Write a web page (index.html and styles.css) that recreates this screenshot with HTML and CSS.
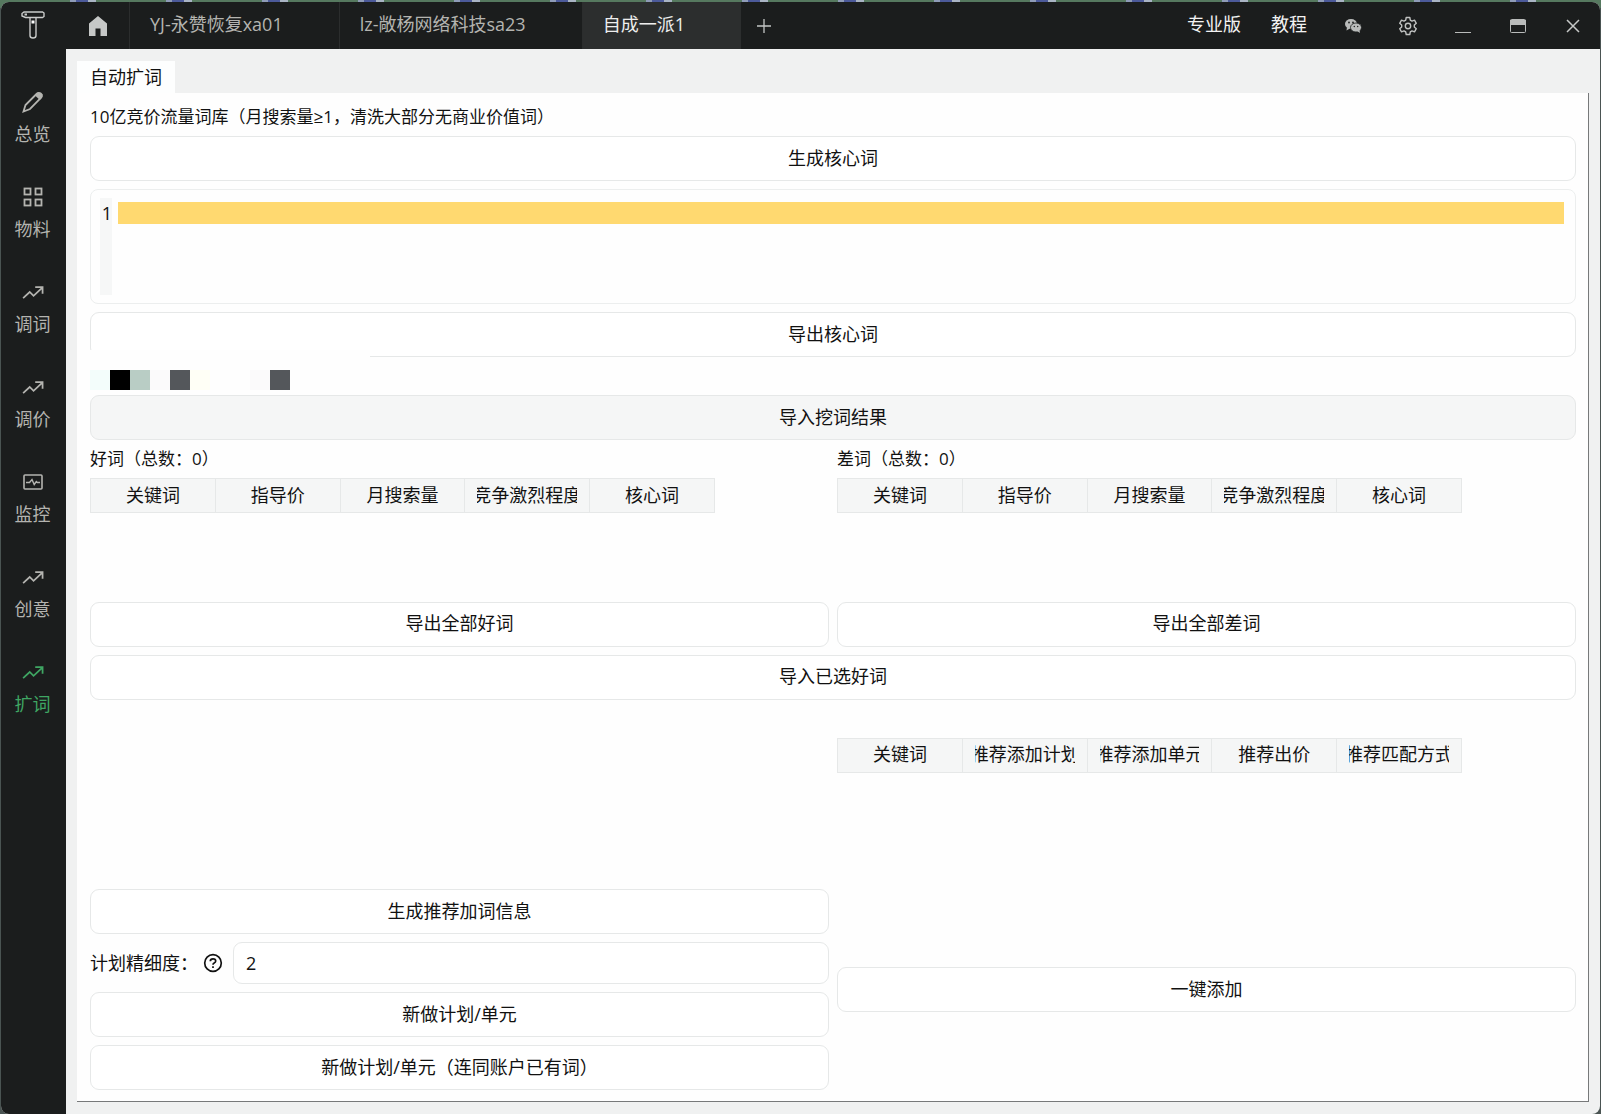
FILE: index.html
```html
<!DOCTYPE html>
<html lang="zh-CN">
<head>
<meta charset="utf-8">
<meta name="viewport" content="width=device-width, initial-scale=1">
<title>自动扩词</title>
<link rel="stylesheet" href="styles.css">
</head>
<body>
<svg class="sprite" aria-hidden="true">
  <symbol id="trend" viewBox="0 0 20 20">
    <path d="M1 15.500 7 10 10.500 13.500 18.500 6M12 5.500H18.700V11.500" fill="none" stroke="currentColor" stroke-width="1.600"/>
  </symbol>
</svg>
<div class="window">
  <aside class="sidebar">
    <svg class="logo" viewBox="0 0 24 28" aria-hidden="true" fill="none" stroke="#c9cbca" stroke-width="1.400">
      <path d="M3 1h18.500l1.500 1v3.500l-1.500 1H4.500L1 5V2.500z"/>
      <path d="M3.500 3.500h2.500" stroke-width="2"/>
      <path d="M9 6.500v18q0 2.500 3 2.500t3-2.500v-18"/>
      <path d="M10.500 11h3" stroke="#fff" stroke-width="3"/>
    </svg>
    <nav class="menu">
      <a class="menu-item" href="#overview">
        <svg class="menu-icon" viewBox="0 0 22 22" aria-hidden="true"><path d="M1.500 20.500 3.500 14 14.500 3q2-2 4-.2t.3 4.200L8 18z" fill="none" stroke="currentColor" stroke-width="1.800"/><path d="M13 4.500 16 1.500 19 1.500 20.800 3.500 20.500 6 17.800 9z" fill="currentColor"/></svg>
        总览</a>
      <a class="menu-item" href="#material">
        <svg class="menu-icon" viewBox="0 0 22 22" aria-hidden="true" fill="none" stroke="currentColor" stroke-width="1.800"><rect x="2.500" y="2.500" width="6" height="6"/><rect x="13.500" y="2.500" width="6" height="6"/><rect x="2.500" y="13.500" width="6" height="6"/><rect x="13.500" y="13.500" width="6" height="6"/></svg>
        物料</a>
      <a class="menu-item" href="#words"><svg class="menu-icon" aria-hidden="true"><use href="#trend"/></svg>调词</a>
      <a class="menu-item" href="#price"><svg class="menu-icon" aria-hidden="true"><use href="#trend"/></svg>调价</a>
      <a class="menu-item" href="#monitor">
        <svg class="menu-icon" viewBox="0 0 22 22" aria-hidden="true" fill="none" stroke="currentColor"><rect x="2" y="4" width="18" height="14" rx="1" stroke-width="1.600"/><path d="M4 11.500H7.500L10 8.500 12.200 13.500 14.300 10.500 15.300 11.500H18" stroke-width="1.400"/></svg>
        监控</a>
      <a class="menu-item" href="#creative"><svg class="menu-icon" aria-hidden="true"><use href="#trend"/></svg>创意</a>
      <a class="menu-item is-active" href="#expand"><svg class="menu-icon" aria-hidden="true"><use href="#trend"/></svg>扩词</a>
    </nav>
  </aside>

  <div class="workspace">
    <header class="titlebar">
      <button class="home" type="button" aria-label="首页">
        <svg width="20" height="20" viewBox="0 0 20 20" aria-hidden="true"><path d="M10 0 19 7.500V20H12.500V12.500H7.500V20H1V7.500z" fill="#c6c8c7"/></svg>
      </button>
      <a class="account" href="#a1">YJ-永赞恢复xa01</a>
      <a class="account" href="#a2">lz-敞杨网络科技sa23</a>
      <a class="account is-active" href="#a3">自成一派1</a>
      <button class="add" type="button" aria-label="新建标签">
        <svg width="16" height="16" viewBox="0 0 16 16" aria-hidden="true"><path d="M8 1V15M1 8H15" stroke="#c4c6c5" stroke-width="1.300"/></svg>
      </button>
      <div class="tools">
        <a class="tool-link" href="#pro">专业版</a>
        <a class="tool-link" href="#help">教程</a>
        <button class="tool" type="button" aria-label="微信">
          <svg width="18" height="16" viewBox="0 0 18 16" aria-hidden="true"><ellipse cx="7" cy="6" rx="6" ry="5" fill="#b9bbba"/><path d="M3 9 2.500 12.500 6 10.500z" fill="#b9bbba"/><ellipse cx="12" cy="9.500" rx="5.500" ry="4.500" fill="#b9bbba" stroke="#1b1d1d" stroke-width=".8"/><path d="M13 13 16 15 15.500 12z" fill="#b9bbba"/><g fill="#1b1d1d"><circle cx="5" cy="4.500" r=".9"/><circle cx="9" cy="4.500" r=".9"/><circle cx="10.300" cy="8.500" r=".7"/><circle cx="13.700" cy="8.500" r=".7"/></g></svg>
        </button>
        <button class="tool" type="button" aria-label="设置">
          <svg width="20" height="20" viewBox="0 0 20 20" aria-hidden="true" fill="none" stroke="#c0c2c1" stroke-width="1.400"><path d="M8.200 1.500h3.600l.5 2.600 1.700 1 2.500-.9 1.800 3.100-2 1.700v2l2 1.700-1.800 3.100-2.500-.9-1.700 1-.5 2.600H8.200l-.5-2.600-1.700-1-2.500.9-1.800-3.100 2-1.700V9l-2-1.700 1.800-3.100 2.500.9 1.700-1z" stroke-linejoin="round"/><circle cx="10" cy="10" r="2.700"/></svg>
        </button>
        <button class="tool" type="button" aria-label="最小化">
          <svg width="16" height="16" viewBox="0 0 16 16" aria-hidden="true"><path d="M0 14.500H16" stroke="#b9bbba"/></svg>
        </button>
        <button class="tool" type="button" aria-label="最大化">
          <svg width="16" height="14" viewBox="0 0 16 14" aria-hidden="true"><rect x=".5" y=".5" width="15" height="13" rx="1" fill="none" stroke="#b9bbba"/><path d="M0 1H16V6H0z" fill="#b9bbba"/></svg>
        </button>
        <button class="tool" type="button" aria-label="关闭">
          <svg width="14" height="14" viewBox="0 0 14 14" aria-hidden="true"><path d="M1 1 13 13M13 1 1 13" stroke="#c6c8c7" stroke-width="1.500"/></svg>
        </button>
      </div>
    </header>

    <main class="content">
      <button class="page-tab" type="button">自动扩词</button>
      <section class="panel">
        <label class="caption" for="seed">10亿竞价流量词库（月搜索量≥1，清洗大部分无商业价值词）</label>
        <button class="btn" type="button">生成核心词</button>
        <div class="editor">
          <div class="gutter">1</div>
          <textarea class="code" id="seed" spellcheck="false"></textarea>
        </div>
        <button class="btn" type="button">导出核心词</button>
        <div class="mosaic" aria-hidden="true">
          <i class="px mint"></i><i class="px black"></i><i class="px sage"></i><i class="px mist"></i><i class="px slate"></i><i class="px cream"></i><i class="px"></i><i class="px"></i><i class="px mist"></i><i class="px slate"></i>
        </div>
        <button class="btn is-filled" type="button">导入挖词结果</button>

        <div class="columns results">
          <div class="column">
            <div class="caption">好词（总数：0）</div>
            <div class="grid-area">
              <table class="grid">
                <thead><tr><th><span>关键词</span></th><th><span>指导价</span></th><th><span>月搜索量</span></th><th><span>竞争激烈程度</span></th><th><span>核心词</span></th></tr></thead>
              </table>
            </div>
            <button class="btn" type="button">导出全部好词</button>
          </div>
          <div class="column">
            <div class="caption">差词（总数：0）</div>
            <div class="grid-area">
              <table class="grid">
                <thead><tr><th><span>关键词</span></th><th><span>指导价</span></th><th><span>月搜索量</span></th><th><span>竞争激烈程度</span></th><th><span>核心词</span></th></tr></thead>
              </table>
            </div>
            <button class="btn" type="button">导出全部差词</button>
          </div>
        </div>

        <button class="btn" type="button">导入已选好词</button>

        <div class="columns recommend">
          <div></div>
          <div class="column">
            <div class="caption"></div>
            <div class="grid-area">
              <table class="grid">
                <thead><tr><th><span>关键词</span></th><th><span>推荐添加计划</span></th><th><span>推荐添加单元</span></th><th><span>推荐出价</span></th><th><span>推荐匹配方式</span></th></tr></thead>
              </table>
            </div>
          </div>
          <div class="column">
            <button class="btn" type="button">生成推荐加词信息</button>
            <div class="field">
              <label for="level">计划精细度：</label>
              <svg class="help" viewBox="0 0 20 20" aria-hidden="true" fill="none" stroke="#111" stroke-width="1.700"><circle cx="10" cy="10" r="8.300"/><path d="M7.300 8.200Q7.300 5.800 10 5.800T12.700 8Q12.700 9.300 11.200 10 10 10.600 10 11.800M10 13.200V14.900"/></svg>
              <input class="input" id="level" type="text" value="2">
            </div>
            <button class="btn" type="button">新做计划/单元</button>
            <button class="btn" type="button">新做计划/单元（连同账户已有词）</button>
          </div>
          <button class="btn add-all" type="button">一键添加</button>
        </div>
      </section>
    </main>
  </div>
</div>
</body>
</html>
```
FILE: styles.css
```css
* {
  box-sizing: border-box;
}

body {
  margin: 0;
  min-height: 100vh;
  display: flex;
  padding: 2px 1px 0;
  background:
    repeating-linear-gradient(90deg, #56795f 0 70px, #8f9cb8 70px 76px, #4c5a9a 76px 88px, #a9b4c4 88px 96px) top / 100% 8px no-repeat,
    #4a5452;
  font: 18px/22px "Open Sans", "Noto Sans CJK SC", sans-serif;
  color: #111;
}

button,
input,
textarea {
  font: inherit;
  color: inherit;
}

button {
  padding: 0;
  border: 0;
  background: none;
}

a {
  color: inherit;
  text-decoration: none;
}

.sprite {
  position: absolute;
  width: 0;
  height: 0;
}

.window {
  flex: 1;
  min-width: 0;
  display: flex;
  border-radius: 8px;
  overflow: hidden;
  background: #f0f1f1;
}

/* left navigation */
.sidebar {
  flex: 0 0 65px;
  padding-right: 2px;
  background: #1b1d1d;
  color: #b4b4b0;
}

.logo {
  display: block;
  width: 24px;
  height: 28px;
  margin: 9px auto 0;
}

.menu {
  display: flex;
  flex-direction: column;
  gap: 41px;
  margin-top: 52px;
}

.menu-item {
  display: flex;
  flex-direction: column;
  align-items: center;
  gap: 10px;
}

.menu-icon {
  width: 22px;
  height: 22px;
}

.menu-item.is-active {
  color: #3fa663;
}

/* title bar */
.workspace {
  flex: 1;
  min-width: 0;
  display: flex;
  flex-direction: column;
}

.titlebar {
  flex: 0 0 47px;
  display: flex;
  background: #1b1d1d;
  color: #b4b4b0;
}

.titlebar svg {
  display: block;
  margin: 0 auto;
}

.home {
  flex: 0 0 63px;
}

.account {
  display: flex;
  align-items: center;
  padding: 0 56px 3px 20px;
  border-left: 1px solid #2b2d2d;
  white-space: nowrap;
}

.account.is-active {
  background: #2c2e2e;
  color: #eee;
}

.add {
  flex: 0 0 46px;
}

.tools {
  display: flex;
  align-items: center;
  margin-left: auto;
  color: #f2f2f2;
}

.tool-link {
  padding: 0 15px 3px;
  white-space: nowrap;
}

.tool {
  width: 55px;
  height: 47px;
}

.tool-link + .tool {
  margin-left: 3px;
}

/* page body */
.content {
  flex: 1;
  display: flex;
  flex-direction: column;
  align-items: flex-start;
  padding: 12px 11px 12px;
}

.page-tab {
  height: 32px;
  padding: 0 13px;
  background: #fdfefe;
}

.panel {
  flex: 1;
  align-self: stretch;
  display: flex;
  flex-direction: column;
  gap: 8px;
  padding: 13px 12px 11px 13px;
  border-right: 1px solid #77797a;
  border-bottom: 1px solid #77797a;
  background: #fefefe;
}

.caption {
  min-height: 22px;
  font-size: 17px;
  white-space: nowrap;
}

.btn {
  width: 100%;
  height: 45px;
  padding-bottom: 2px;
  border: 1px solid #e6e8e8;
  border-radius: 9px;
  background: #fff;
}

.btn.is-filled {
  background: #f5f6f6;
}

.editor {
  display: flex;
  gap: 6px;
  height: 115px;
  padding: 8px 11px 8px 9px;
  border: 1px solid #eceeee;
  border-radius: 8px;
}

.gutter {
  width: 12px;
  padding: 4px 0 0;
  background: #f6f7f7;
  text-align: right;
}

.code {
  flex: 1;
  margin-top: 4px;
  padding: 0 4px;
  border: 0;
  outline: 0;
  resize: none;
  background: linear-gradient(#ffd970, #ffd970) top / 100% 22px no-repeat;
}

/* redacted account line, its patch reaches over the button above */
.mosaic {
  position: relative;
  display: flex;
  height: 22px;
  padding-top: 5px;
}

.mosaic::before {
  content: "";
  position: absolute;
  top: -15px;
  left: 0;
  width: 280px;
  height: 20px;
  background: #fefefe;
}

.px {
  flex: 0 0 20px;
  height: 20px;
}

.mint { background: #f3fdfb; }
.black { background: #000; }
.sage { background: #b9cdc5; }
.mist { background: #fbfafb; }
.slate { background: #54575b; }
.cream { background: #fffff6; }

.columns {
  display: grid;
  grid-template-columns: repeat(2, minmax(0, 1fr));
  gap: 8px;
}

.results {
  flex: 1 1 198px;
}

.recommend {
  flex: 1 1 382px;
  grid-template-rows: 1fr auto;
}

.column {
  display: flex;
  flex-direction: column;
  gap: 8px;
}

.grid-area {
  flex: 1;
}

.grid {
  table-layout: fixed;
  width: 625px;
  max-width: 100%;
  border-collapse: collapse;
}

.grid th {
  height: 34px;
  padding: 0 12px 2px;
  border: 1px solid #e6e8e8;
  background: #f5f6f6;
  font-weight: 400;
}

.grid span {
  display: flex;
  justify-content: center;
  overflow: hidden;
  white-space: nowrap;
}

.field {
  display: flex;
  align-items: center;
}

.help {
  flex: 0 0 20px;
  height: 20px;
  margin: 0 10px 0 5px;
}

.input {
  flex: 1;
  min-width: 0;
  height: 42px;
  padding: 0 12px;
  border: 1px solid #e6e8e8;
  border-radius: 9px;
  background: #fff;
  outline: 0;
}

.add-all {
  align-self: center;
}
```
